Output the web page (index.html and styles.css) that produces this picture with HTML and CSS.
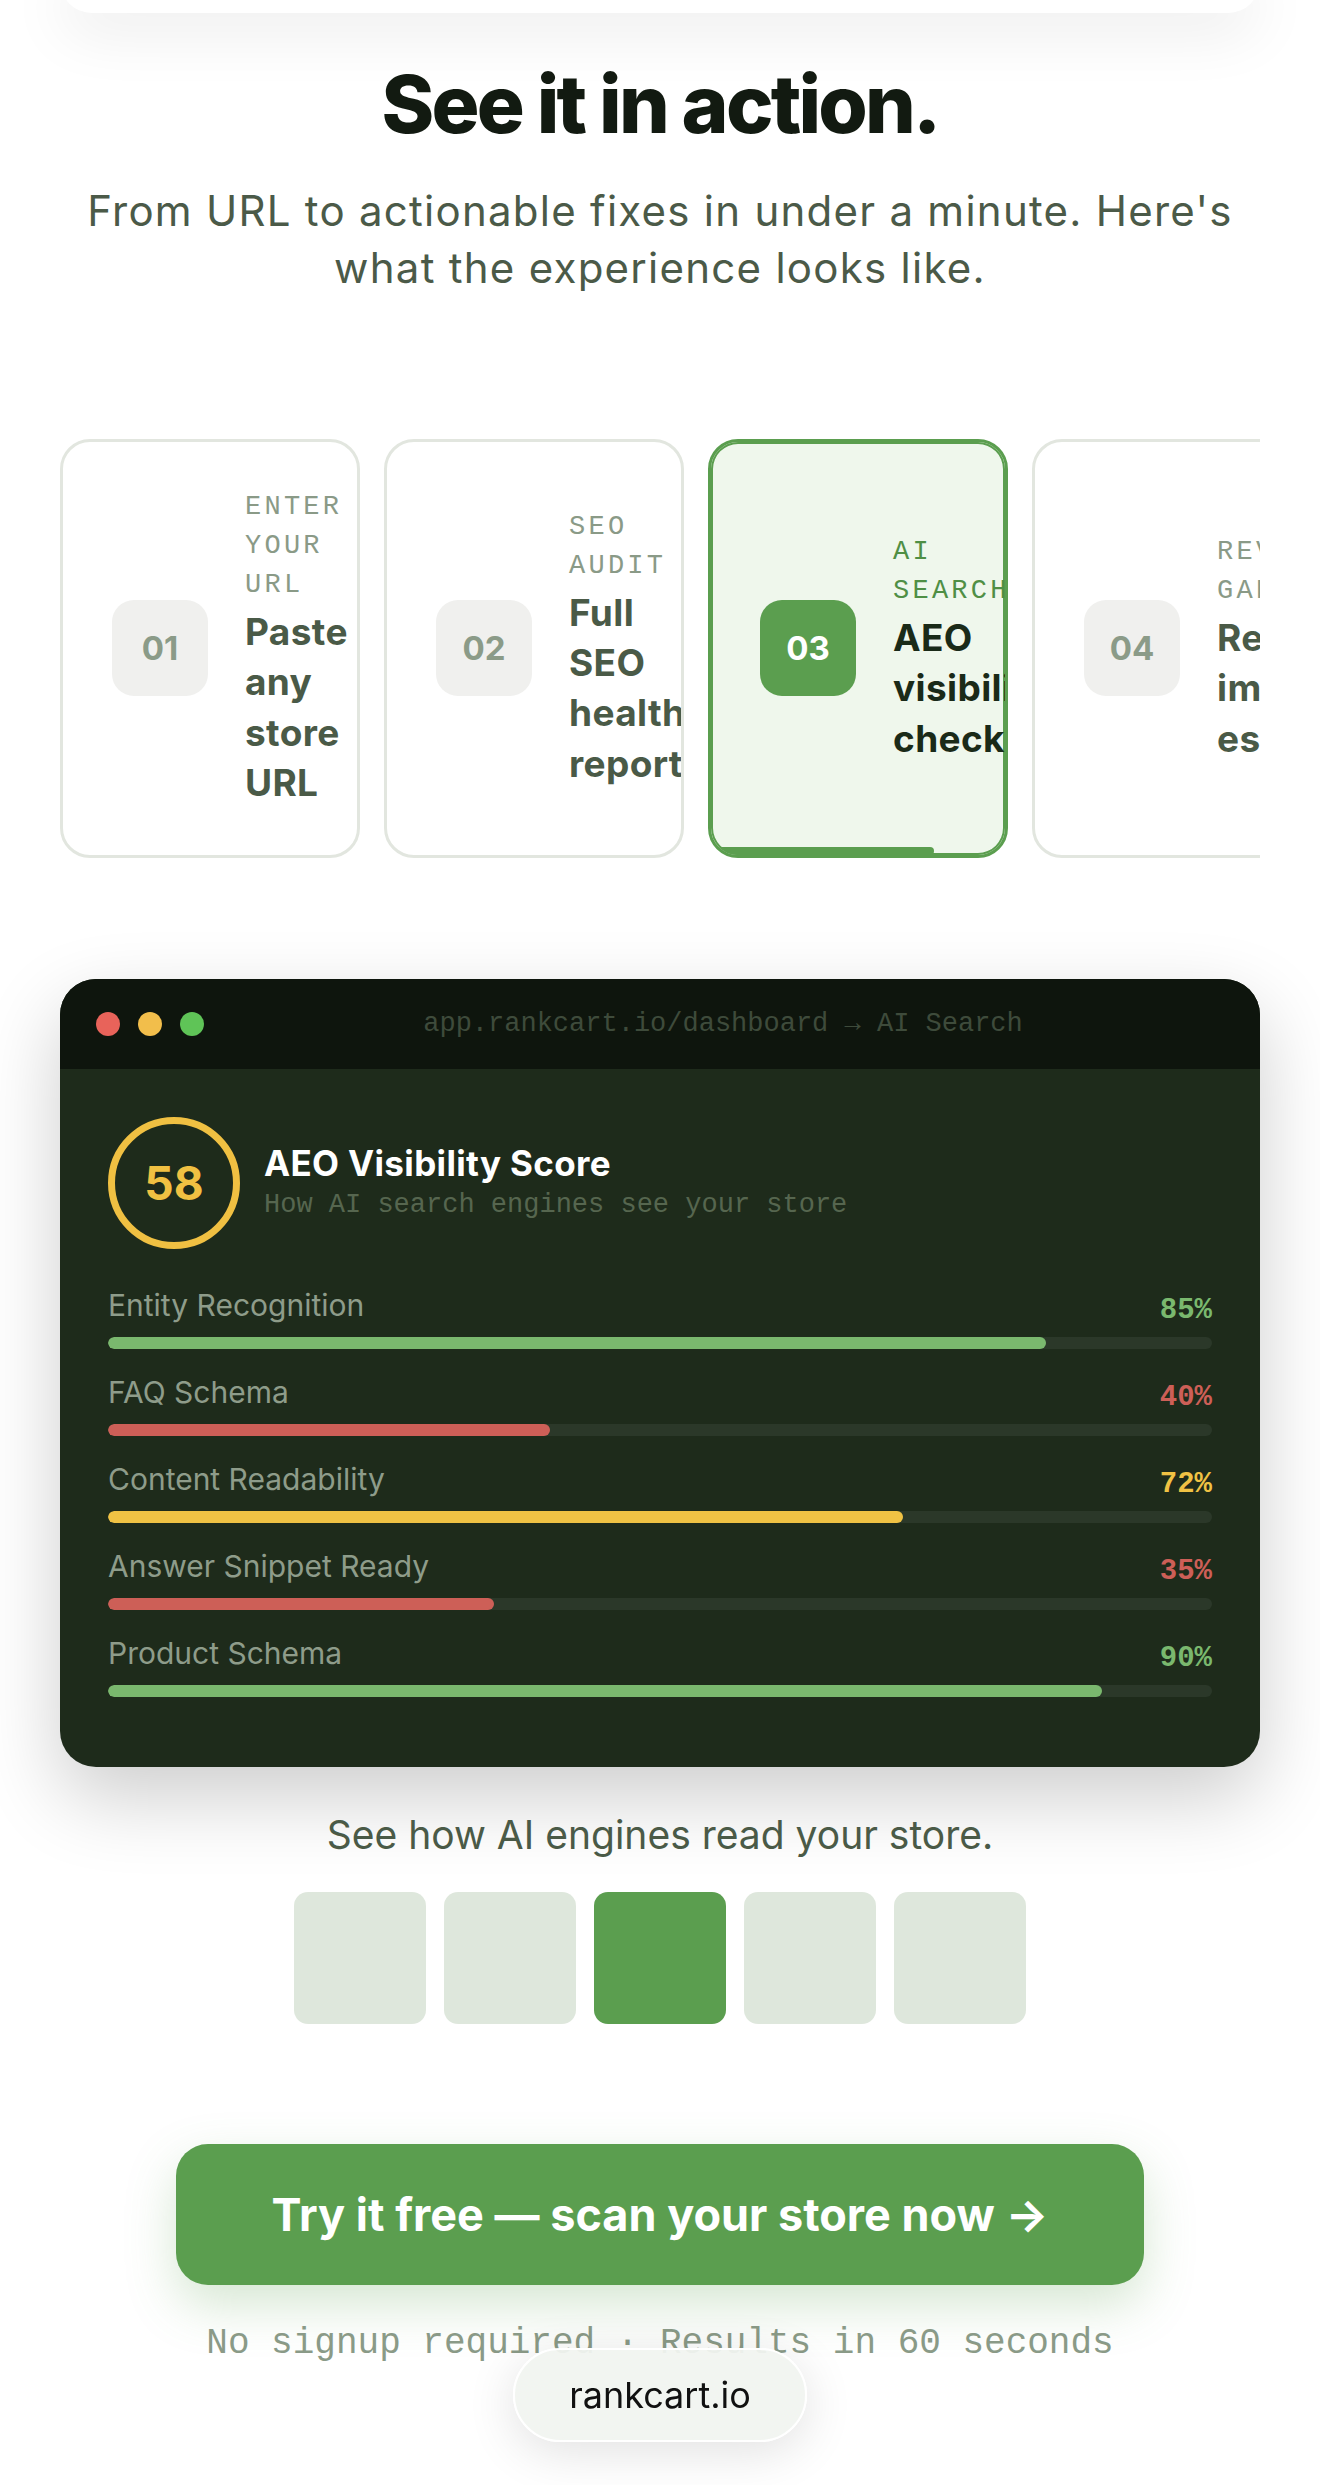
FILE: index.html
```html
<!DOCTYPE html>
<html lang="en">
<head>
<meta charset="utf-8">
<title>See it in action — RankCart</title>
<link rel="stylesheet" href="styles.css">
</head>
<body>
<div class="prev-card"></div>
<section class="demo">
  <h2 class="demo-title">See it in action.</h2>
  <p class="demo-sub">From URL to actionable fixes in under a minute. Here's what the experience looks like.</p>

  <div class="steps">
    <div class="step">
      <div class="step-num">01</div>
      <div class="step-text">
        <div class="step-label">Enter your URL</div>
        <div class="step-name">Paste any store URL</div>
      </div>
    </div>
    <div class="step">
      <div class="step-num">02</div>
      <div class="step-text">
        <div class="step-label">SEO audit</div>
        <div class="step-name">Full SEO health report</div>
      </div>
    </div>
    <div class="step is-active">
      <div class="step-num">03</div>
      <div class="step-text">
        <div class="step-label">AI search</div>
        <div class="step-name">AEO visibility check</div>
      </div>
      <div class="step-progress"></div>
    </div>
    <div class="step">
      <div class="step-num">04</div>
      <div class="step-text">
        <div class="step-label">Revenue gaps</div>
        <div class="step-name">Revenue impact estimates</div>
      </div>
    </div>
  </div>

  <div class="window">
    <div class="window-bar">
      <span class="dot dot-red"></span>
      <span class="dot dot-yellow"></span>
      <span class="dot dot-green"></span>
      <span class="window-url">app.rankcart.io/dashboard → AI Search</span>
    </div>
    <div class="window-body">
      <div class="score">
        <div class="score-ring">58</div>
        <div class="score-text">
          <div class="score-title">AEO Visibility Score</div>
          <div class="score-sub">How AI search engines see your store</div>
        </div>
      </div>
      <div class="metrics">
        <div class="metric">
          <div class="metric-head"><span class="metric-name">Entity Recognition</span><span class="metric-val good">85%</span></div>
          <div class="track"><div class="fill good" style="width:85%"></div></div>
        </div>
        <div class="metric">
          <div class="metric-head"><span class="metric-name">FAQ Schema</span><span class="metric-val bad">40%</span></div>
          <div class="track"><div class="fill bad" style="width:40%"></div></div>
        </div>
        <div class="metric">
          <div class="metric-head"><span class="metric-name">Content Readability</span><span class="metric-val warn">72%</span></div>
          <div class="track"><div class="fill warn" style="width:72%"></div></div>
        </div>
        <div class="metric">
          <div class="metric-head"><span class="metric-name">Answer Snippet Ready</span><span class="metric-val bad">35%</span></div>
          <div class="track"><div class="fill bad" style="width:35%"></div></div>
        </div>
        <div class="metric">
          <div class="metric-head"><span class="metric-name">Product Schema</span><span class="metric-val good">90%</span></div>
          <div class="track"><div class="fill good" style="width:90%"></div></div>
        </div>
      </div>
    </div>
  </div>

  <p class="caption">See how AI engines read your store.</p>
  <div class="thumbs">
    <span class="thumb"></span>
    <span class="thumb"></span>
    <span class="thumb is-active"></span>
    <span class="thumb"></span>
    <span class="thumb"></span>
  </div>

  <a class="cta" href="#">Try it free — scan your store now →</a>
  <p class="note">No signup required · Results in 60 seconds</p>
</section>

<div class="urlbar">rankcart.io</div>
</body>
</html>
```

FILE: styles.css
```css
* { box-sizing: border-box; }

html, body {
  margin: 0;
  background: #ffffff;
}

body {
  font-family: Inter, "Noto Sans", sans-serif;
  color: #121a11;
}

.prev-card {
  height: 45px;
  margin: -32px 60px 0;
  background: #ffffff;
  border-radius: 0 0 32px 32px;
  box-shadow: 0 20px 60px rgba(0, 0, 0, 0.08);
}

.demo {
  padding: 0 60px;
}

.demo-title {
  margin: 47px 0 0;
  font-size: 80px;
  line-height: 88px;
  font-weight: 800;
  letter-spacing: -0.035em;
  text-align: center;
  color: #121a11;
}

.demo-sub {
  margin: 34px auto 0;
  max-width: 1180px;
  font-size: 42px;
  line-height: 57px;
  letter-spacing: 0.03em;
  text-align: center;
  color: #4b5a48;
}

/* steps */
.steps {
  display: flex;
  gap: 24px;
  overflow: hidden;
  margin-top: 143px;
}

.step {
  position: relative;
  flex: 0 0 300px;
  display: flex;
  align-items: center;
  gap: 37px;
  padding: 46px 49px;
  border: 3px solid #e2e6df;
  border-radius: 30px;
  background: #ffffff;
  overflow: hidden;
}

.step-num {
  flex: 0 0 96px;
  height: 96px;
  border-radius: 22px;
  background: #f0f0ee;
  color: #8b9b88;
  font-size: 33px;
  font-weight: 700;
  display: flex;
  align-items: center;
  justify-content: center;
}

.step-text {
  flex: 1 1 auto;
  min-width: 0;
}

.step-label {
  font-family: "Liberation Mono", "DejaVu Sans Mono", monospace;
  font-size: 27px;
  line-height: 39px;
  letter-spacing: 0.12em;
  text-transform: uppercase;
  color: #8a9a87;
}

.step-name {
  margin-top: 2px;
  font-size: 37px;
  line-height: 50.4px;
  font-weight: 700;
  letter-spacing: 0.01em;
  color: #4a5a47;
}

.step.is-active {
  background: #eff7ec;
  border-color: #5b9e4f;
  box-shadow: inset 0 0 0 2px #5b9e4f;
}

.step.is-active .step-num {
  background: #5b9e4f;
  color: #ffffff;
}

.step.is-active .step-label {
  color: #4f8f45;
}

.step.is-active .step-name {
  color: #1a2a18;
}

.step-progress {
  position: absolute;
  left: 0;
  bottom: 0;
  width: 76%;
  height: 8px;
  background: #5b9e4f;
  border-radius: 0 4px 4px 0;
}

/* dashboard window */
.window {
  margin-top: 121px;
  border-radius: 36px;
  overflow: hidden;
  background: #1e2b1b;
  box-shadow: 0 30px 80px rgba(0, 0, 0, 0.2);
}

.window-bar {
  height: 90px;
  display: flex;
  align-items: center;
  gap: 18px;
  padding: 0 36px;
  background: #0e150d;
}

.dot {
  flex: 0 0 24px;
  height: 24px;
  border-radius: 50%;
}

.dot-red { background: #e8635a; }
.dot-yellow { background: #f2be4b; }
.dot-green { background: #5fc457; }

.window-url {
  flex: 1 1 auto;
  text-align: center;
  font-family: "Liberation Mono", "DejaVu Sans Mono", monospace;
  font-size: 27px;
  color: #3e4b3b;
}

.window-body {
  padding: 48px 48px 70px;
}

.score {
  display: flex;
  align-items: center;
  gap: 24px;
}

.score-ring {
  flex: 0 0 132px;
  height: 132px;
  border: 7px solid #f0c042;
  border-radius: 50%;
  display: flex;
  align-items: center;
  justify-content: center;
  font-size: 46px;
  font-weight: 700;
  color: #f0c042;
}

.score-title {
  font-size: 35px;
  line-height: 40px;
  font-weight: 700;
  letter-spacing: 0.01em;
  color: #ffffff;
}

.score-sub {
  margin-top: 4px;
  font-family: "Liberation Mono", "DejaVu Sans Mono", monospace;
  font-size: 27px;
  line-height: 36px;
  color: #56664f;
}

.metrics {
  margin-top: 38px;
  display: flex;
  flex-direction: column;
  gap: 25px;
}

.metric-head {
  display: flex;
  justify-content: space-between;
  align-items: flex-start;
  height: 36px;
}

.metric-name {
  font-size: 30px;
  line-height: 36px;
  color: #8e9c8a;
}

.metric-val {
  margin-top: 6px;
  font-family: "Liberation Mono", "DejaVu Sans Mono", monospace;
  font-size: 29px;
  line-height: 36px;
  font-weight: 700;
}

.metric-val.good { color: #7ab86e; }
.metric-val.bad { color: #cd5f57; }
.metric-val.warn { color: #f0c244; }

.track {
  margin-top: 14px;
  height: 12px;
  border-radius: 6px;
  background: #2b3829;
  overflow: hidden;
}

.fill {
  height: 100%;
  border-radius: 6px;
}

.fill.good { background: #7ab86e; }
.fill.bad { background: #cd5f57; }
.fill.warn { background: #f0c244; }

/* caption + thumbs */
.caption {
  margin: 39px 0 0;
  text-align: center;
  font-size: 39px;
  line-height: 57px;
  color: #4a5a47;
}

.thumbs {
  margin-top: 29px;
  display: flex;
  justify-content: center;
  gap: 18px;
}

.thumb {
  width: 132px;
  height: 132px;
  border-radius: 14px;
  background: rgba(80, 128, 70, 0.19);
}

.thumb.is-active {
  background: #5b9e4f;
}

/* call to action */
.cta {
  display: block;
  width: 968px;
  margin: 120px auto 0;
  padding: 44px 0;
  border-radius: 32px;
  background: #5b9e4f;
  color: #ffffff;
  font-size: 45px;
  line-height: 53px;
  font-weight: 700;
  text-align: center;
  text-decoration: none;
  box-shadow: 0 20px 50px rgba(91, 158, 79, 0.25);
}

.note {
  margin: 34px 0 0;
  text-align: center;
  font-family: "Liberation Mono", "DejaVu Sans Mono", monospace;
  font-size: 36px;
  line-height: 50px;
  color: #8a9a87;
}

/* floating browser address pill */
.urlbar {
  position: fixed;
  left: 50%;
  bottom: 43px;
  transform: translateX(-50%);
  width: 294px;
  height: 94px;
  border-radius: 47px;
  background: rgba(241, 244, 240, 0.94);
  border: 2px solid #ffffff;
  box-shadow: 0 10px 50px rgba(0, 0, 0, 0.12);
  display: flex;
  align-items: center;
  justify-content: center;
  font-size: 36px;
  color: #111111;
}
```
